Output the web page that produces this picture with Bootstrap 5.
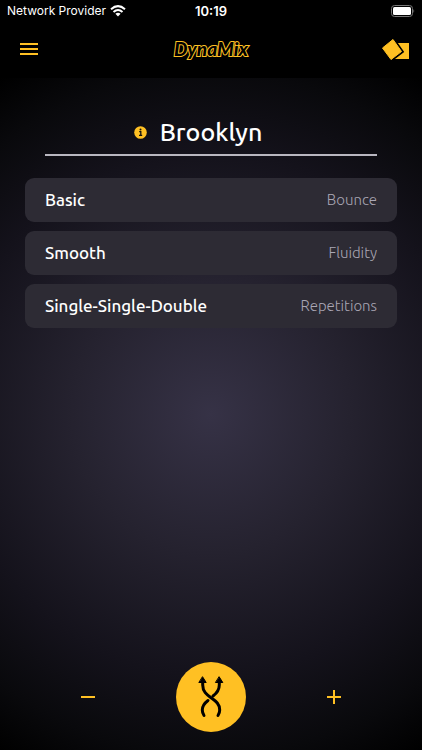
<!DOCTYPE html>
<html lang="en">
<head>
<meta charset="utf-8">
<meta name="viewport" content="width=device-width, initial-scale=1">
<title>DynaMix</title>
<link href="https://cdn.jsdelivr.net/npm/bootstrap@5.3.0/dist/css/bootstrap.min.css" rel="stylesheet">
<style>
  :root { --gold: #ffc023; }
  body { font-family: Ubuntu, "Noto Sans", sans-serif; background: #000; color: #fff; }
  svg { display: block; }
  .status-bar { font: 500 13px/22px Inter, sans-serif; padding: 0 7px; }
  .status-bar > * { flex: 1 1 0; }
  .carrier { font-weight: 400; font-size: 12px; white-space: nowrap; }
  .clock { font-weight: 600; }
  .app-header { background: #000; padding-bottom: 2px; }
  .app-nav { height: 54px; padding: 0 12px 0 16px; }
  .icon-btn { color: var(--gold); background: none; border: 0; padding: 0; }
  .brand-name { font: italic 900 19px/30px Lato, sans-serif; color: #000; -webkit-text-stroke: 2px var(--gold); paint-order: stroke fill; text-decoration: none; padding-right: 2px; }
  .stage { background: radial-gradient(circle farthest-corner at 50% 50%, #363246 0%, #25222f 35%, #14121b 66%, #09090c 86%, #000 100%); padding: 32px 0 18px; }
  .title-row { margin: 0 45px 22px; height: 46px; border-bottom: 2px solid #b9b7c0; gap: 13px; padding-right: 26px; }
  .title-row h1 { font-size: 25px; line-height: 44px; font-weight: 500; margin: 0; }
  .moves { gap: 9px; padding: 0 25px; }
  .move { height: 44px; padding: 0 20px; border-radius: 9px; background: #2d2b34; color: #fff; font-size: 17px; line-height: 24px; border: 0; text-align: left; }
  .move-name { font-weight: 500; }
  .move-kind { color: #aaa7b4; font-size: 15px; font-weight: 300; }
  .actions > div { flex: 1 1 0; }
  .mix-btn { width: 70px; height: 70px; border-radius: 50%; background: var(--gold); border: 0; padding: 0; color: #000; }
</style>
</head>
<body class="d-flex flex-column min-vh-100">
<header class="app-header">
  <div class="status-bar d-flex align-items-center">
    <div class="carrier d-flex align-items-center gap-1">Network Provider
      <svg width="16" height="12" viewBox="0 0 16 12" fill="none" stroke="#fff" stroke-width="2" aria-hidden="true"><path d="M1 4.300Q8-2 15 4.300M3.500 7Q8 3 12.500 7"/><path d="M5.400 8.800Q8 6.800 10.600 8.800L8 11.500Z" fill="#fff" stroke="none"/></svg>
    </div>
    <div class="clock text-center">10:19</div>
    <div class="d-flex justify-content-end">
      <svg width="24" height="12" viewBox="0 0 24 12" aria-hidden="true"><rect x=".5" y=".5" width="21" height="11" rx="3" fill="none" stroke="#777"/><rect x="2" y="2" width="18" height="8" rx="1.500" fill="#fff"/><path d="M22.500 4q1.500 2 0 4" fill="#888"/></svg>
    </div>
  </div>
  <nav class="app-nav d-flex align-items-center justify-content-between" aria-label="Main">
    <button type="button" class="icon-btn" aria-label="Menu">
      <svg width="26" height="26" viewBox="0 0 26 26" stroke="currentColor" stroke-width="2"><path d="M4 8h18M4 13h18M4 18h18"/></svg>
    </button>
    <a href="#" class="brand-name">DynaMix</a>
    <button type="button" class="icon-btn" aria-label="Cards">
      <svg width="28" height="24" viewBox="0 0 28 24" fill="currentColor"><rect x="13" y="6" width="14" height="16"/><path d="M.500 11 11 2.500 19.500 14.500 9 22.500Z" stroke="#000" stroke-width="4"/><path d="M.500 11 11 2.500 19.500 14.500 9 22.500Z" stroke="currentColor" stroke-width="1" stroke-linejoin="round"/></svg>
    </button>
  </nav>
</header>
<main class="stage flex-grow-1 d-flex flex-column">
  <div class="title-row d-flex align-items-center justify-content-center">
    <button type="button" class="icon-btn" aria-label="About Brooklyn">
      <svg width="13" height="13" viewBox="0 0 13 13"><circle cx="6.500" cy="6.500" r="6.300" fill="currentColor"/><path d="M5.200 5.700h1.600v3.500M5 9.400h3.200" fill="none" stroke="#111" stroke-width="1.300"/><circle cx="6.500" cy="3.500" r="1" fill="#111"/></svg>
    </button>
    <h1>Brooklyn</h1>
  </div>
  <div class="moves d-flex flex-column">
    <button type="button" class="move d-flex align-items-center justify-content-between"><span class="move-name">Basic</span><span class="move-kind">Bounce</span></button>
    <button type="button" class="move d-flex align-items-center justify-content-between"><span class="move-name">Smooth</span><span class="move-kind">Fluidity</span></button>
    <button type="button" class="move d-flex align-items-center justify-content-between"><span class="move-name">Single-Single-Double</span><span class="move-kind">Repetitions</span></button>
  </div>
  <div class="actions d-flex align-items-center mt-auto">
    <div class="d-flex justify-content-center"><button type="button" class="icon-btn" aria-label="Remove a move">
      <svg width="24" height="24" viewBox="0 0 24 24" stroke="currentColor" stroke-width="2"><path d="M5 12h14"/></svg>
    </button></div>
    <button type="button" class="mix-btn d-flex align-items-center justify-content-center" aria-label="Mix">
      <svg width="28" height="44" viewBox="0 0 28 44" fill="none" stroke="currentColor" stroke-width="3" stroke-linecap="round"><path d="M5.700 7v3c0 6.500 4 9.500 8.300 12.700s8.700 6 8.700 12.300q0 3-1.700 5.500"/><path d="M22.300 7v3c0 5.500-3 8.500-6.300 11M11 25.500c-3.300 2.500-5.700 5-5.700 9.500q0 3 1.700 5.500"/><path d="M5.700 2 9.200 7.500h-7ZM22.300 2l3.500 5.500h-7Z" fill="currentColor" stroke-width="1"/></svg>
    </button>
    <div class="d-flex justify-content-center"><button type="button" class="icon-btn" aria-label="Add a move">
      <svg width="24" height="24" viewBox="0 0 24 24" stroke="currentColor" stroke-width="2"><path d="M5 12h14M12 5v14"/></svg>
    </button></div>
  </div>
</main>
<script src="https://cdn.jsdelivr.net/npm/bootstrap@5.3.0/dist/js/bootstrap.bundle.min.js"></script>
</body>
</html>
